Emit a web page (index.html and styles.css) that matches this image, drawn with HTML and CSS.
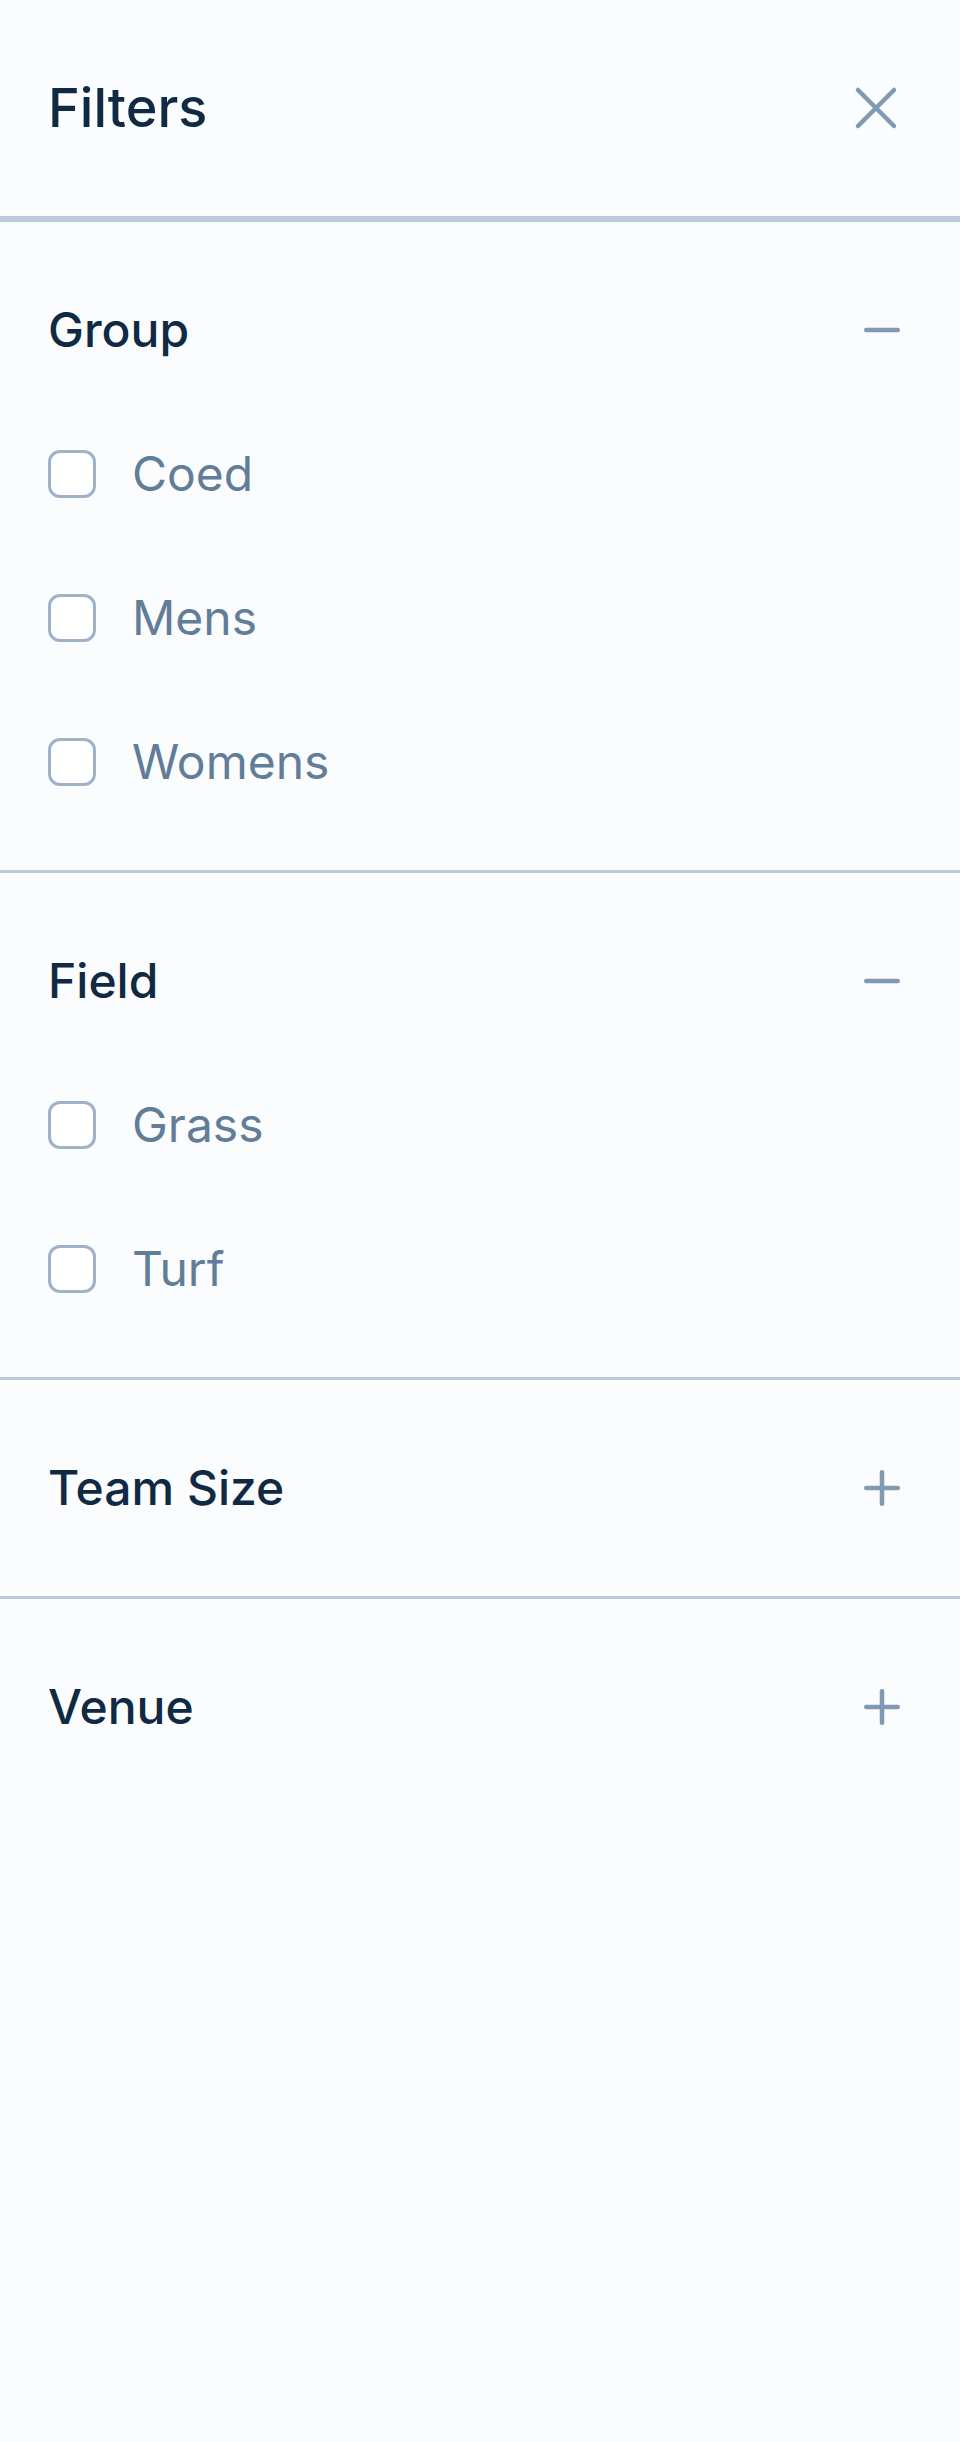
FILE: index.html
```html
<!DOCTYPE html>
<html lang="en">
<head>
    <meta charset="UTF-8">
    <meta name="viewport" content="width=device-width, initial-scale=1.0">
    <title>Filters</title>
    <link rel="stylesheet" href="styles.css">
</head>
<body>
    <header class="filters-header">
        <h1>Filters</h1>
        <button type="button" class="close-btn" aria-label="Close filters">
            <svg viewBox="0 0 24 24" aria-hidden="true"><path d="M6 18L18 6M6 6l12 12"/></svg>
        </button>
    </header>

    <form class="filters">
        <section class="filter-group open">
            <h2>
                <button type="button" class="toggle-btn" aria-expanded="true" aria-controls="group-options">
                    Group
                    <svg viewBox="0 0 20 20" aria-hidden="true"><path d="M4.75 10h10.5"/><path class="bar" d="M10 4.75v10.5"/></svg>
                </button>
            </h2>
            <div class="options" id="group-options">
                <div class="option">
                    <input type="checkbox" id="coed" name="group" value="coed">
                    <label for="coed">Coed</label>
                </div>
                <div class="option">
                    <input type="checkbox" id="mens" name="group" value="mens">
                    <label for="mens">Mens</label>
                </div>
                <div class="option">
                    <input type="checkbox" id="womens" name="group" value="womens">
                    <label for="womens">Womens</label>
                </div>
            </div>
        </section>

        <section class="filter-group open">
            <h2>
                <button type="button" class="toggle-btn" aria-expanded="true" aria-controls="field-options">
                    Field
                    <svg viewBox="0 0 20 20" aria-hidden="true"><path d="M4.75 10h10.5"/><path class="bar" d="M10 4.75v10.5"/></svg>
                </button>
            </h2>
            <div class="options" id="field-options">
                <div class="option">
                    <input type="checkbox" id="grass" name="field" value="grass">
                    <label for="grass">Grass</label>
                </div>
                <div class="option">
                    <input type="checkbox" id="turf" name="field" value="turf">
                    <label for="turf">Turf</label>
                </div>
            </div>
        </section>

        <section class="filter-group">
            <h2>
                <button type="button" class="toggle-btn" aria-expanded="false">
                    Team Size
                    <svg viewBox="0 0 20 20" aria-hidden="true"><path d="M4.75 10h10.5"/><path class="bar" d="M10 4.75v10.5"/></svg>
                </button>
            </h2>
        </section>

        <section class="filter-group">
            <h2>
                <button type="button" class="toggle-btn" aria-expanded="false">
                    Venue
                    <svg viewBox="0 0 20 20" aria-hidden="true"><path d="M4.75 10h10.5"/><path class="bar" d="M10 4.75v10.5"/></svg>
                </button>
            </h2>
        </section>
    </form>

    <script>
        const toggles = document.querySelectorAll('.toggle-btn');

        toggles.forEach(toggle => {
            toggle.addEventListener('click', () => {
                const open = toggle.closest('.filter-group').classList.toggle('open');
                toggle.setAttribute('aria-expanded', open);
            });
        });
    </script>
</body>
</html>
```
FILE: styles.css
```css
* {
    box-sizing: border-box;
}

body {
    font-family: Inter, sans-serif;
    margin: 0;
    min-height: 100vh;
    background-color: #fafcfe;
    color: #102a43;
}

h1,
h2 {
    margin: 0;
    font-weight: 500;
}

button {
    padding: 0;
    border: none;
    background: none;
    color: inherit;
    font: inherit;
    cursor: pointer;
}

svg {
    display: block;
    fill: none;
    stroke: #829ab1;
    stroke-width: 1.5;
    stroke-linecap: round;
}

.filters-header {
    display: flex;
    justify-content: space-between;
    align-items: center;
    padding: 72px 48px;
    border-bottom: 6px solid #bccbdc;
}

.filters-header h1 {
    font-size: 54px;
    line-height: 72px;
}

.close-btn svg {
    width: 72px;
    height: 72px;
}

.filter-group {
    padding: 36px 48px;
    border-bottom: 3px solid #bccbdc;
}

.filter-group:last-child {
    border-bottom: none;
}

.filter-group h2 {
    font-size: 48px;
    line-height: 72px;
}

.toggle-btn {
    display: flex;
    justify-content: space-between;
    align-items: center;
    width: 100%;
    padding: 36px 0;
}

.toggle-btn svg {
    width: 60px;
    height: 60px;
}

/* The plus becomes a minus when the group is open */
.open .bar {
    display: none;
}

.options {
    display: none;
}

.open .options {
    display: block;
}

.option {
    display: flex;
    align-items: center;
    gap: 36px;
    padding: 36px 0;
}

.option label {
    flex: 1;
    font-size: 48px;
    line-height: 72px;
    color: #627d98;
    cursor: pointer;
}

.option input {
    appearance: none;
    width: 48px;
    height: 48px;
    margin: 0;
    border: 3px solid #9fb3c8;
    border-radius: 12px;
    background-color: #ffffff;
    cursor: pointer;
}

.option input:checked {
    background-color: #627d98;
}
```
